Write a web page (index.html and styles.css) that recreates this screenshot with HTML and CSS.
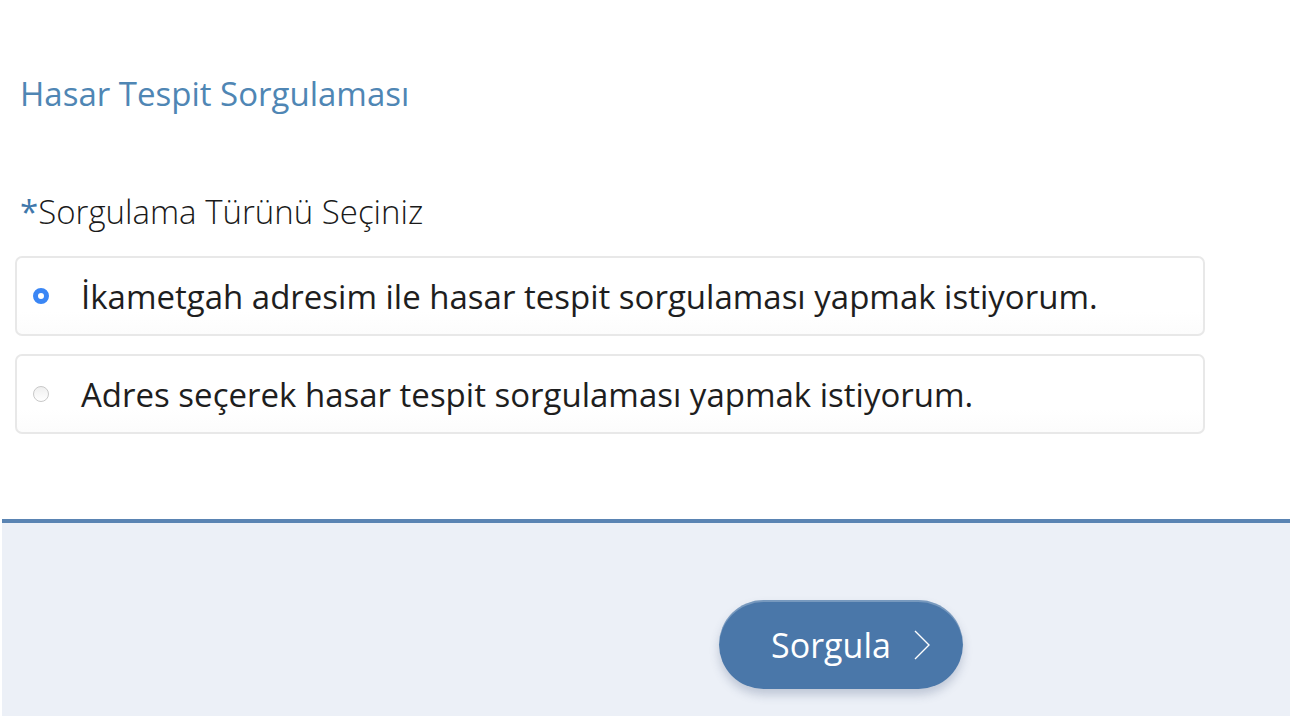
FILE: index.html
```html
<!DOCTYPE html>
<html lang="tr">
<head>
<meta charset="utf-8">
<link rel="stylesheet" href="styles.css">
</head>
<body>
<div class="page">
  <div class="content">
    <h1 class="title">Hasar Tespit Sorgulaması</h1>
    <div class="field-label"><span class="req">*</span>Sorgulama Türünü Seçiniz</div>
    <div class="options">
      <label class="option">
        <span class="radio checked"></span>
        <span class="opt-text">İkametgah adresim ile hasar tespit sorgulaması yapmak istiyorum.</span>
      </label>
      <label class="option">
        <span class="radio"></span>
        <span class="opt-text">Adres seçerek hasar tespit sorgulaması yapmak istiyorum.</span>
      </label>
    </div>
  </div>
  <div class="footer">
    <button class="btn">Sorgula
      <svg class="chev" width="18" height="32" viewBox="0 0 18 32"><path d="M2 2 L16 16 L2 30" fill="none" stroke="#fff" stroke-width="1.4"/></svg>
    </button>
  </div>
</div>
</body>
</html>
```
FILE: styles.css
```css
html, body {
  margin: 0;
  padding: 0;
  background: #fff;
  font-family: "Open Sans", "Liberation Sans", sans-serif;
}
.page {
  width: 1290px;
  height: 716px;
  display: flex;
  flex-direction: column;
  overflow: hidden;
}
.content {
  padding: 0 85px 0 15px;
  height: 519px;
  box-sizing: border-box;
}
.title {
  margin: 0;
  padding: 72px 0 0 5px;
  font-size: 33px;
  font-weight: 400;
  color: #4f86b4;
  line-height: 44px;
}
.field-label {
  margin-top: 74px;
  padding-left: 5px;
  font-size: 33px;
  font-weight: 300;
  color: #1a1a1a;
  line-height: 44px;
}
.req {
  color: #3f78ab;
  font-weight: 400;
}
.options {
  margin-top: 22px;
  display: flex;
  flex-direction: column;
  gap: 18px;
}
.option {
  display: flex;
  align-items: center;
  height: 80px;
  box-sizing: border-box;
  border: 2px solid #e8e8e8;
  border-radius: 7px;
  background: linear-gradient(#fff 70%, #fcfcfc);
  padding-left: 16px;
}
.radio {
  width: 16px;
  height: 16px;
  border-radius: 50%;
  box-sizing: border-box;
  border: 1px solid #c8c8c8;
  background: linear-gradient(#efefef, #fff);
  flex: none;
}
.radio.checked {
  border: 5px solid #3a86f5;
  background: #fff;
}
.opt-text {
  margin-left: 32px;
  font-family: "Open Sans", sans-serif;
  font-size: 33px;
  color: #1e1e1e;
}
.footer {
  flex: 1;
  margin-left: 2px;
  background: #ecf0f7;
  border-top: 4px solid #5a84b3;
  display: flex;
  align-items: flex-start;
  padding-top: 77px;
  padding-left: 717px;
}
.btn {
  width: 244px;
  height: 89px;
  border: none;
  border-radius: 45px;
  background: #4a77a9;
  box-shadow: inset 0 2px 0 rgba(255,255,255,0.25), 0 6px 10px rgba(60,80,120,0.25);
  color: #fff;
  font-family: "Open Sans", sans-serif;
  font-size: 34px;
  display: flex;
  align-items: center;
  justify-content: center;
  gap: 22px;
  padding: 0 0 0 20px;
}
.chev {
  display: block;
}
```
